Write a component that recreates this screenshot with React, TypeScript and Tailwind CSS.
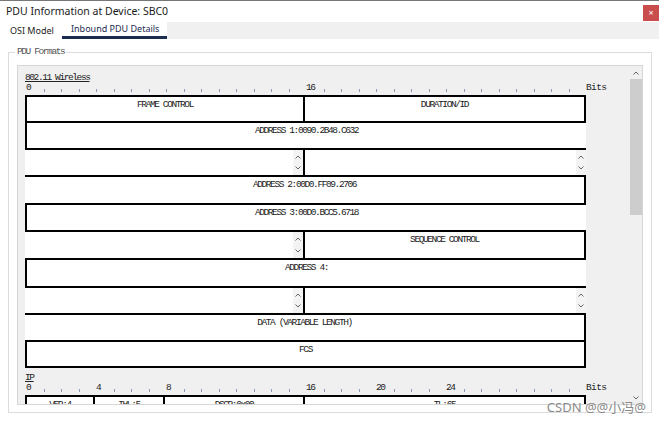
import React from 'react';

const mono = "font-['Liberation_Mono',monospace] text-[9.5px] tracking-[-1.4px] text-[#222]";

type Cell = {
  text?: string;
  w: number;
  l?: boolean;
  r?: boolean;
  spin?: boolean;
};

type Row = { h: number; cells: Cell[] };

const wifiRows: Row[] = [
  { h: 26, cells: [{ text: 'FRAME CONTROL', w: 280, l: true, r: true }, { text: 'DURATION/ID', w: 281, r: true }] },
  { h: 27, cells: [{ text: 'ADDRESS 1:0090.2B48.C632', w: 561, l: true }] },
  { h: 27, cells: [{ w: 280, r: true, spin: true }, { w: 281, spin: true }] },
  { h: 28, cells: [{ text: 'ADDRESS 2:00D0.FF09.2706', w: 561, r: true }] },
  { h: 27, cells: [{ text: 'ADDRESS 3:00D0.BCC5.6718', w: 561, l: true }] },
  { h: 28, cells: [{ w: 280, r: true, spin: true }, { text: 'SEQUENCE CONTROL', w: 281, r: true }] },
  { h: 28, cells: [{ text: 'ADDRESS 4:', w: 561, l: true }] },
  { h: 27, cells: [{ w: 280, r: true, spin: true }, { w: 281, spin: true }] },
  { h: 27, cells: [{ text: 'DATA (VARIABLE LENGTH)', w: 561, r: true }] },
  { h: 26, cells: [{ text: 'FCS', w: 561, l: true, r: true }] },
];

const ipRow: Row = {
  h: 27,
  cells: [
    { text: 'VER:4', w: 70, l: true, r: true },
    { text: 'IHL:5', w: 70, r: true },
    { text: 'DSCP:0x00', w: 140, r: true },
    { text: 'TL:65', w: 281, r: true },
  ],
};

function Chevron({ up }: { up?: boolean }) {
  return (
    <svg width="6" height="4" viewBox="0 0 6 4" className="block">
      <path
        d={up ? 'M0.5 3.5 L3 1 L5.5 3.5' : 'M0.5 0.5 L3 3 L5.5 0.5'}
        fill="none"
        stroke="#666"
        strokeWidth="1"
      />
    </svg>
  );
}

function Spinner() {
  return (
    <div className="w-[10px] h-full bg-[#f3f3f3] flex flex-col items-center justify-between py-[5px]">
      <Chevron up />
      <Chevron />
    </div>
  );
}

function Ruler({ marks }: { marks: number[] }) {
  return (
    <div className={`flex h-[12px] ${mono}`}>
      {Array.from({ length: 32 }, (_, i) => (
        <div key={i} className="w-[17.5px] shrink-0">
          {marks.includes(i) ? (
            <span className="block pl-px leading-[10px]">{i}</span>
          ) : (
            <div className="ml-px mt-[6px] w-px h-[3px] bg-[#8c9bb0]" />
          )}
        </div>
      ))}
      <span className="pl-px leading-[10px] tracking-[-0.6px]">Bits</span>
    </div>
  );
}

function FieldRow({ row, last }: { row: Row; last?: boolean }) {
  return (
    <div
      className={`flex w-[561px] border-t-2 border-black ${last ? 'border-b-2' : ''}`}
      style={{ height: row.h + (last ? 2 : 0) }}
    >
      {row.cells.map((c, i) => (
        <div
          key={i}
          className={`flex shrink-0 bg-white border-black ${c.l ? 'border-l-2' : ''} ${c.r ? 'border-r-2' : ''}`}
          style={{ width: c.w }}
        >
          <div className={`flex-1 text-center pt-[3px] leading-[10px] ${mono}`}>{c.text}</div>
          {c.spin && <Spinner />}
        </div>
      ))}
    </div>
  );
}

export default function App() {
  return (
    <div className="relative w-[659px] h-[422px] overflow-hidden bg-white font-['Noto_Sans',sans-serif] border-t border-[#777]">
      {/* title bar */}
      <div className="flex items-center justify-between h-[21px] pl-[6px]">
        <span className="text-[10.5px] text-[#1a1a1a]">PDU Information at Device: SBC0</span>
        <div className="flex items-center justify-center w-[16px] h-[16px] mt-[2px] bg-[#c94d4d] text-white text-[9px] leading-none">
          ×
        </div>
      </div>

      {/* tabs */}
      <div className="flex h-[17px]">
        <div className="w-[62px] pl-[10px] text-[9px] leading-[17px] text-[#222]">OSI Model</div>
        <div className="w-[105px] pl-[9px] text-[9px] leading-[14px] text-[#1b2c52] border-b-[3px] border-[#1b2c52]">
          Inbound PDU Details
        </div>
        <div className="flex-1 bg-[#f0f0f0]" />
      </div>

      {/* group box */}
      <div className="relative mt-[13px] ml-[8px] w-[644px] h-[361px] border border-[#dcdcdc] pt-[12px] pl-[8px]">
        <span className={`absolute -top-[6px] left-[6px] bg-white px-[2px] leading-[10px] ${mono} text-[#555]`}>
          PDU Formats
        </span>

        <div className="flex w-[626px] h-[340px] bg-[#f0f0f0] border border-[#d6d6d6]">
          <div className="flex-1 overflow-hidden pl-[7px] pt-[6px]">
            <div className={`h-[11px] leading-[11px] underline ${mono}`}>802.11 Wireless</div>
            <Ruler marks={[0, 16]} />
            {wifiRows.map((r, i) => (
              <FieldRow key={i} row={r} last={i === wifiRows.length - 1} />
            ))}
            <div className={`mt-[4px] h-[11px] leading-[11px] underline ${mono}`}>IP</div>
            <Ruler marks={[0, 4, 8, 16, 20, 24]} />
            <FieldRow row={ipRow} />
          </div>

          {/* scrollbar */}
          <div className="w-[13px] flex flex-col items-center bg-[#f0f0f0]">
            <div className="h-[13px] flex items-center justify-center">
              <Chevron up />
            </div>
            <div className="w-[12px] h-[136px] bg-[#cdcdcd]" />
            <div className="flex-1" />
            <div className="h-[13px] flex items-center justify-center">
              <Chevron />
            </div>
          </div>
        </div>
      </div>

      <span className="absolute right-[13px] bottom-[8px] text-[13px] leading-none text-[#8a8a8a] font-['Noto_Sans','Noto_Sans_CJK_SC',sans-serif]">
        CSDN @@小冯@
      </span>
    </div>
  );
}
